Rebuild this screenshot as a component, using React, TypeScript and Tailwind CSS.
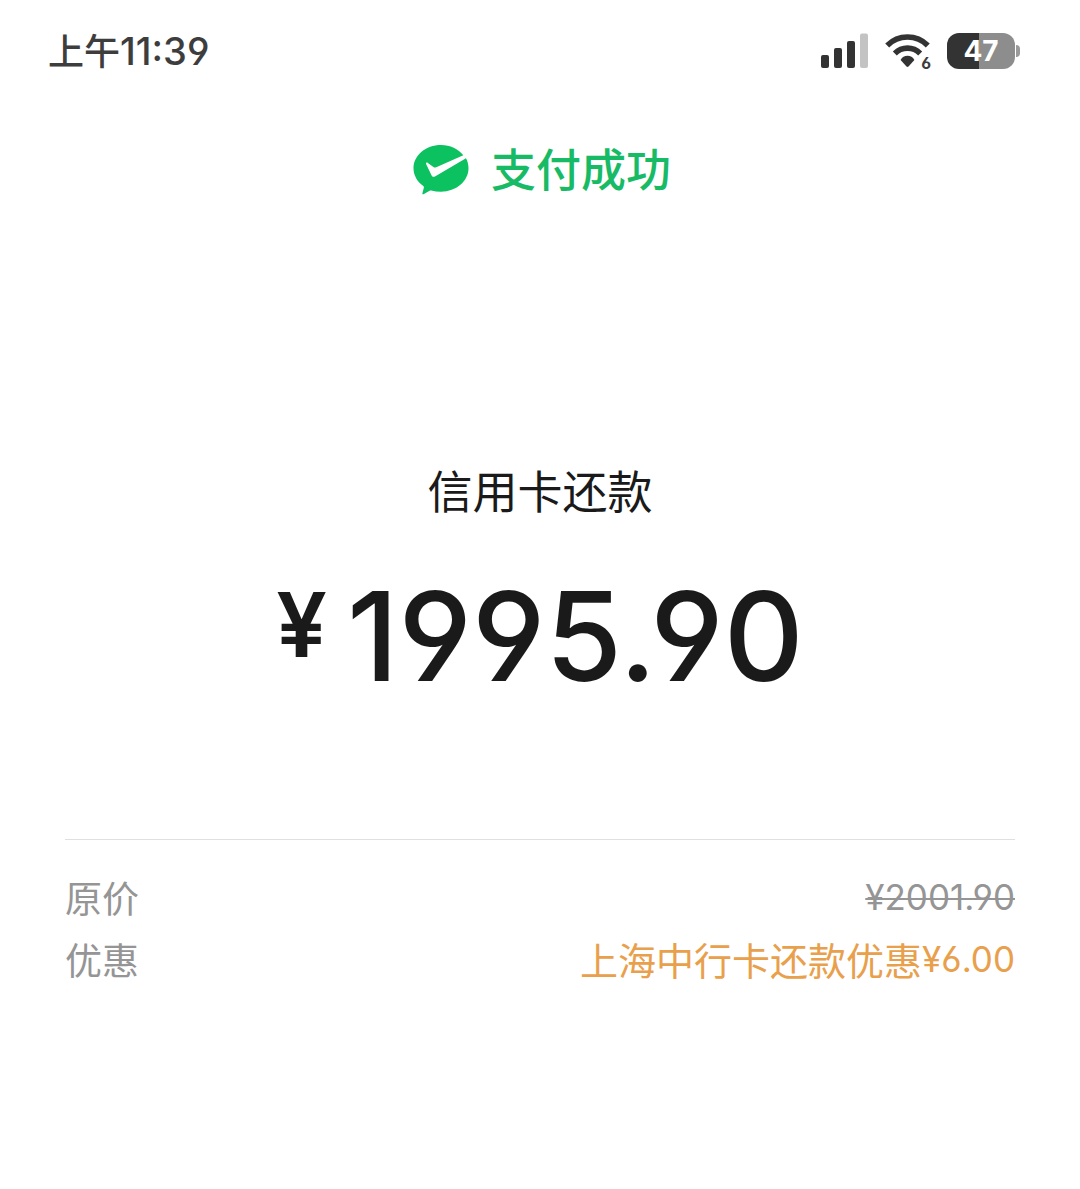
const SignalIcon = () => (
  <svg width="48" height="36" viewBox="0 0 48 36" aria-hidden="true">
    <rect x="1" y="22" width="8" height="13" rx="2" fill="#333" />
    <rect x="14" y="15" width="8" height="20" rx="2" fill="#333" />
    <rect x="27" y="8" width="8" height="27" rx="2" fill="#333" />
    <rect x="40" y="0.5" width="8" height="34.5" rx="2" fill="#c3c3c3" />
  </svg>
);

const WifiIcon = () => (
  <svg width="47" height="36" viewBox="0 0 47 36" aria-hidden="true">
    <path d="M3.2 12.5A28.6 28.6 0 0 1 43.8 12.5" fill="none" stroke="#333" strokeWidth="5.6" />
    <path d="M10.8 20.4A18 18 0 0 1 36.2 20.4" fill="none" stroke="#333" strokeWidth="5.6" />
    <path d="M16.6 27Q19 22.8 23.5 22.8Q28 22.8 30.4 27L24.5 33.6Q23.5 34.4 22.5 33.6Z" fill="#333" />
  </svg>
);

const BatteryIcon = ({ level }: { level: number }) => (
  <div className="flex items-center gap-px">
    <div
      className="flex h-9 w-17 items-center justify-center rounded-xl font-[Inter] text-[28px] leading-none font-bold text-white"
      style={{ background: `linear-gradient(to right, #333 ${level}%, #8d8d8d ${level}%)` }}
    >
      {level}
    </div>
    <div className="h-3 w-1 rounded-r-full bg-[#9a9a9a]" />
  </div>
);

const PayLogo = () => (
  <svg width="56" height="50" viewBox="0 0 56 50" aria-hidden="true">
    <path
      d="M28 0C12.8 0 .5 10.4 .5 23.3C.5 30.4 4.3 36.8 10.3 41.1C10.9 41.6 11 42.2 10.8 42.9L9.4 48.3C9.2 49.2 9.8 49.5 10.5 49.2L16.6 45.7C17.1 45.4 17.6 45.3 18.2 45.5C21.3 46.3 24.6 46.7 28 46.7C43.2 46.7 55.5 36.2 55.5 23.3C55.5 19.6 54.6 16.3 53 13.2L22.4 31.2C20.4 32.3 19.3 31.8 18.5 30.2L13.1 19.1C12.6 17.9 13.8 17.2 14.9 17.9L20.4 21.9C21.6 22.6 22.6 22.7 23.8 22.1L50.3 10.2C45.3 4 37.2 0 28 0Z"
      fill="#0bc160"
    />
  </svg>
);

const StatusBar = () => (
  <header className="flex h-[102px] items-center justify-between pr-15 pl-12 text-[#3d3d3d]">
    <div className="flex items-center">
      <span className="pb-1 text-4xl leading-none font-medium">上午</span>
      <span className="font-[Inter] text-[38px] leading-none font-medium [font-feature-settings:'cv03','cv04']">11:39</span>
    </div>
    <div className="flex items-center gap-4">
      <SignalIcon />
      <div className="relative">
        <WifiIcon />
        <span className="absolute right-0 -bottom-0.5 bg-white font-[Inter] text-base leading-none font-bold [font-feature-settings:'cv03']">
          6
        </span>
      </div>
      <BatteryIcon level={47} />
    </div>
  </header>
);

const App = () => {
  return (
    <main className="min-h-screen bg-white font-['Noto_Sans_CJK_SC',sans-serif] text-[#1a1a1a]">
      <StatusBar />

      <div className="mt-9 flex h-16 items-center justify-center gap-[22px] pl-1">
        <PayLogo />
        <h1 className="pb-1.5 text-[45px] leading-none font-medium text-[#18bb65]">支付成功</h1>
      </div>

      <section className="mt-[254px] flex flex-col items-center">
        <h2 className="text-[45px] leading-[68px]">信用卡还款</h2>
        <p className="mt-[50px] flex items-start gap-5 font-[Inter] leading-none">
          <span className="pt-1.5 text-[90px] font-semibold">¥</span>
          <span className="text-[124px] font-medium [font-feature-settings:'cv03','cv04']">1995.90</span>
        </p>
      </section>

      <dl className="mx-[65px] mt-[141px] border-t border-[#e0e0e0] pt-[26px] text-[37px] leading-[62px]">
        <div className="flex justify-between text-[#959595]">
          <dt>原价</dt>
          <dd className="font-[Inter] text-[35px] line-through decoration-2 [font-feature-settings:'cv03','cv04']">¥2001.90</dd>
        </div>
        <div className="flex justify-between">
          <dt className="text-[#959595]">优惠</dt>
          <dd className="flex text-[38px] text-[#e9a04c]">
            上海中行卡还款优惠
            <span className="font-[Inter] text-[35px] [font-feature-settings:'cv03','cv04']">¥6.00</span>
          </dd>
        </div>
      </dl>
    </main>
  );
};

export default App;
